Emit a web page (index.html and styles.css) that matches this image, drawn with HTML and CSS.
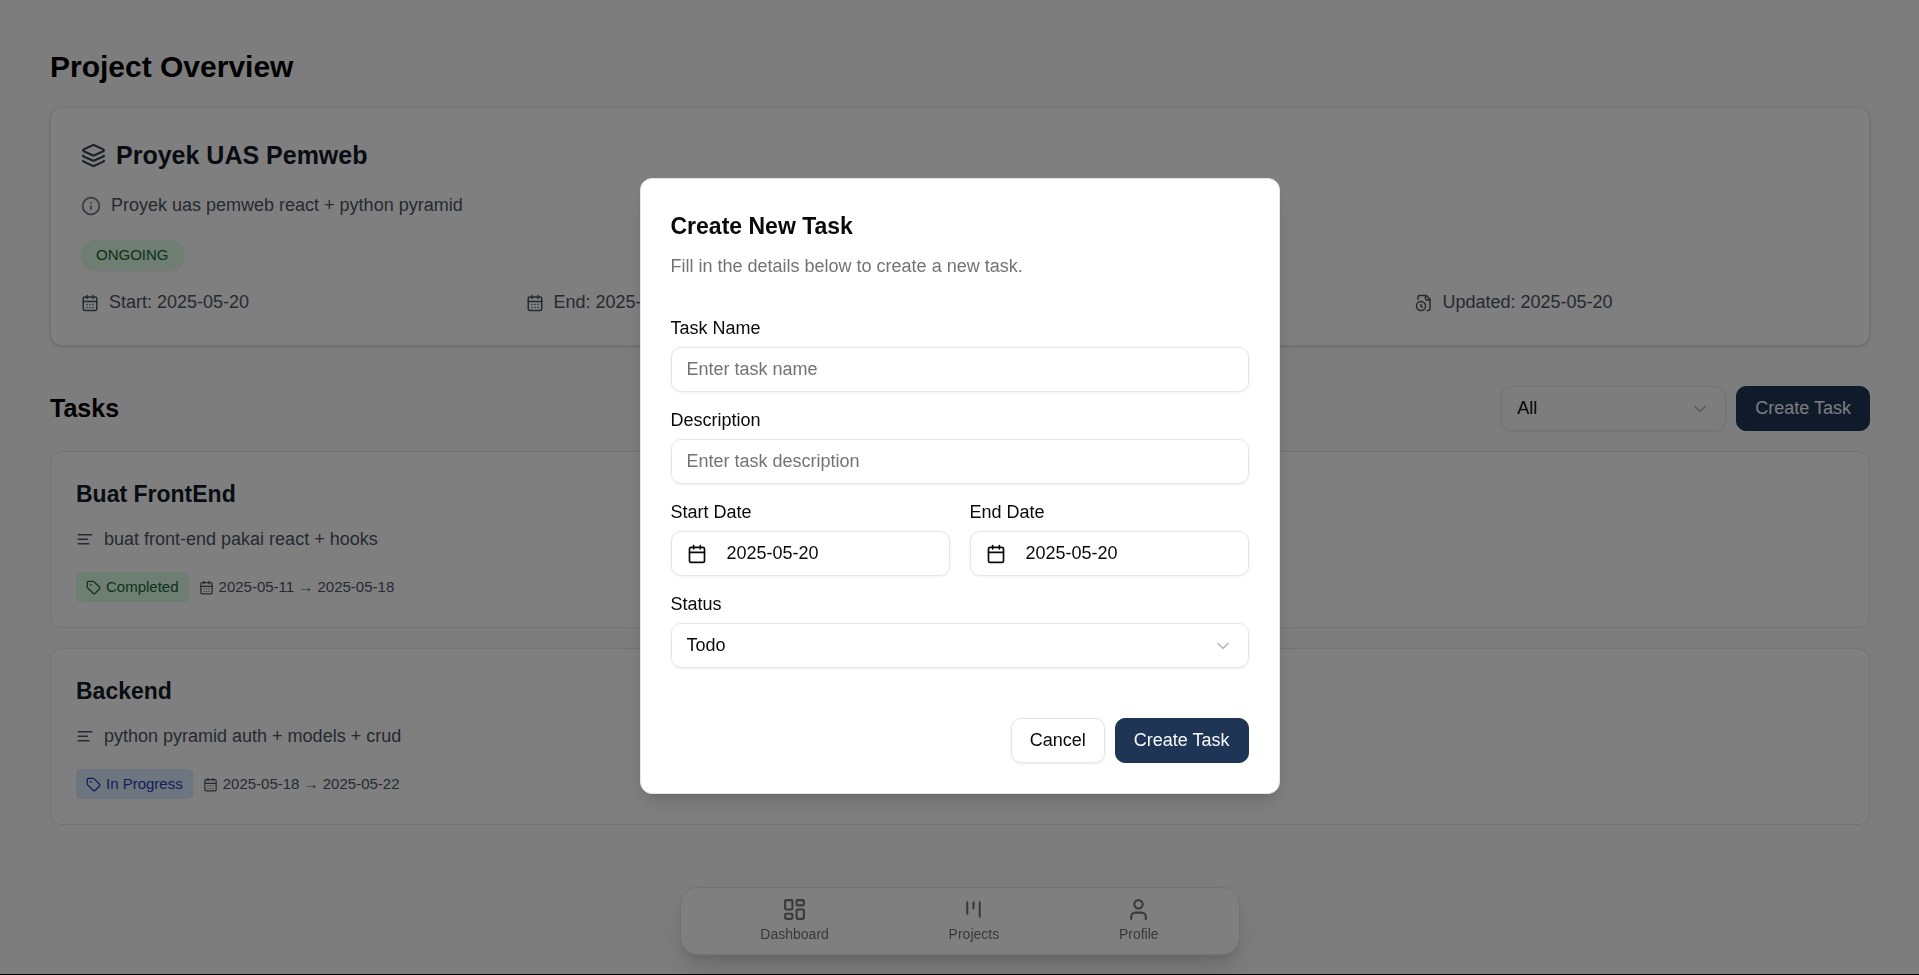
FILE: index.html
```html
<!DOCTYPE html>
<html lang="en">
<head>
<meta charset="utf-8">
<meta name="viewport" content="width=device-width, initial-scale=1">
<title>Project Overview</title>
<link rel="stylesheet" href="styles.css">
</head>
<body>
<svg class="sprite" aria-hidden="true">
  <symbol id="i-layers" viewBox="0 0 24 24"><path d="M12.83 2.18a2 2 0 0 0-1.66 0L2.6 6.08a1 1 0 0 0 0 1.83l8.58 3.91a2 2 0 0 0 1.66 0l8.58-3.9a1 1 0 0 0 0-1.83z"/><path d="M2 12a1 1 0 0 0 .58.91l8.6 3.91a2 2 0 0 0 1.65 0l8.58-3.9A1 1 0 0 0 22 12"/><path d="M2 17a1 1 0 0 0 .58.91l8.6 3.91a2 2 0 0 0 1.65 0l8.58-3.9A1 1 0 0 0 22 17"/></symbol>
  <symbol id="i-info" viewBox="0 0 24 24"><circle cx="12" cy="12" r="10"/><path d="M12 16v-4M12 8h.01"/></symbol>
  <symbol id="i-calendar" viewBox="0 0 24 24"><path d="M8 2v4M16 2v4"/><rect width="18" height="18" x="3" y="4" rx="2"/><path d="M3 10h18"/></symbol>
  <symbol id="i-calendar-days" viewBox="0 0 24 24"><path d="M8 2v4M16 2v4"/><rect width="18" height="18" x="3" y="4" rx="2"/><path d="M3 10h18M8 14h.01M12 14h.01M16 14h.01M8 18h.01M12 18h.01M16 18h.01"/></symbol>
  <symbol id="i-file-clock" viewBox="0 0 24 24"><path d="M16 22h2a2 2 0 0 0 2-2V7l-5-5H6a2 2 0 0 0-2 2v3"/><path d="M14 2v4a2 2 0 0 0 2 2h4"/><circle cx="8" cy="16" r="6"/><path d="M9.5 17.5 8 16.25V14"/></symbol>
  <symbol id="i-text" viewBox="0 0 24 24"><path d="M21 5H3M15 11H3M17 17H3"/></symbol>
  <symbol id="i-tag" viewBox="0 0 24 24"><path d="M12.586 2.586A2 2 0 0 0 11.172 2H4a2 2 0 0 0-2 2v7.172a2 2 0 0 0 .586 1.414l8.704 8.704a2.426 2.426 0 0 0 3.42 0l6.58-6.58a2.426 2.426 0 0 0 0-3.42z"/><circle cx="7.5" cy="7.5" r=".5" fill="currentColor"/></symbol>
  <symbol id="i-chevron" viewBox="0 0 24 24"><path d="m6 9 6 6 6-6"/></symbol>
  <symbol id="i-dashboard" viewBox="0 0 24 24"><rect width="7" height="9" x="3" y="3" rx="1"/><rect width="7" height="5" x="14" y="3" rx="1"/><rect width="7" height="9" x="14" y="12" rx="1"/><rect width="7" height="5" x="3" y="16" rx="1"/></symbol>
  <symbol id="i-kanban" viewBox="0 0 24 24"><path d="M6 5v11M12 5v6M18 5v14"/></symbol>
  <symbol id="i-user" viewBox="0 0 24 24"><path d="M19 21v-2a4 4 0 0 0-4-4H9a4 4 0 0 0-4 4v2"/><circle cx="12" cy="7" r="4"/></symbol>
</svg>

<main class="page">
  <h1 class="page-title">Project Overview</h1>

  <section class="project">
    <h2 class="project-name"><svg class="icon icon-lg"><use href="#i-layers"/></svg>Proyek UAS Pemweb</h2>
    <p class="project-text"><svg class="icon icon-md muted"><use href="#i-info"/></svg>Proyek uas pemweb react + python pyramid</p>
    <span class="pill">ONGOING</span>
    <div class="dates">
      <div class="line"><svg class="icon"><use href="#i-calendar-days"/></svg>Start: 2025-05-20</div>
      <div class="line"><svg class="icon"><use href="#i-calendar-days"/></svg>End: 2025-05-31</div>
      <div class="line"><svg class="icon"><use href="#i-file-clock"/></svg>Created: 2025-05-20</div>
      <div class="line"><svg class="icon"><use href="#i-file-clock"/></svg>Updated: 2025-05-20</div>
    </div>
  </section>

  <div class="toolbar">
    <h2 class="section-title">Tasks</h2>
    <div class="toolbar-actions">
      <div class="select filter">
        <select class="control" aria-label="Filter tasks by status"><option>All</option></select>
        <svg class="icon icon-md chevron"><use href="#i-chevron"/></svg>
      </div>
      <button class="button primary" type="button">Create Task</button>
    </div>
  </div>

  <div class="tasks">
    <article class="task">
      <h3 class="task-name">Buat FrontEnd</h3>
      <p class="line task-text"><svg class="icon"><use href="#i-text"/></svg>buat front-end pakai react + hooks</p>
      <div class="meta">
        <span class="badge done"><svg class="icon icon-sm"><use href="#i-tag"/></svg>Completed</span>
        <span class="range"><svg class="icon icon-sm"><use href="#i-calendar-days"/></svg>2025-05-11 → 2025-05-18</span>
      </div>
    </article>
    <article class="task">
      <h3 class="task-name">Backend</h3>
      <p class="line task-text"><svg class="icon"><use href="#i-text"/></svg>python pyramid auth + models + crud</p>
      <div class="meta">
        <span class="badge progress"><svg class="icon icon-sm"><use href="#i-tag"/></svg>In Progress</span>
        <span class="range"><svg class="icon icon-sm"><use href="#i-calendar-days"/></svg>2025-05-18 → 2025-05-22</span>
      </div>
    </article>
  </div>
</main>

<nav class="dock" aria-label="Main">
  <a class="dock-item" href="#dashboard"><svg class="icon icon-lg"><use href="#i-dashboard"/></svg>Dashboard</a>
  <a class="dock-item" href="#projects"><svg class="icon icon-lg"><use href="#i-kanban"/></svg>Projects</a>
  <a class="dock-item" href="#profile"><svg class="icon icon-lg"><use href="#i-user"/></svg>Profile</a>
</nav>

<div class="overlay">
  <form class="modal" role="dialog" aria-modal="true" aria-labelledby="modal-title">
    <header class="modal-head">
      <h2 class="modal-title" id="modal-title">Create New Task</h2>
      <p class="modal-text">Fill in the details below to create a new task.</p>
    </header>
    <div class="fields">
      <div class="field">
        <label for="name">Task Name</label>
        <input class="control" id="name" type="text" placeholder="Enter task name">
      </div>
      <div class="field">
        <label for="description">Description</label>
        <input class="control" id="description" type="text" placeholder="Enter task description">
      </div>
      <div class="field-row">
        <div class="field">
          <label for="start">Start Date</label>
          <button class="control date" id="start" type="button"><svg class="icon icon-md"><use href="#i-calendar"/></svg>2025-05-20</button>
        </div>
        <div class="field">
          <label for="end">End Date</label>
          <button class="control date" id="end" type="button"><svg class="icon icon-md"><use href="#i-calendar"/></svg>2025-05-20</button>
        </div>
      </div>
      <div class="field">
        <label for="status">Status</label>
        <div class="select">
          <select class="control" id="status"><option>Todo</option></select>
          <svg class="icon icon-md chevron"><use href="#i-chevron"/></svg>
        </div>
      </div>
    </div>
    <footer class="modal-foot">
      <button class="button outline" type="button">Cancel</button>
      <button class="button primary" type="submit">Create Task</button>
    </footer>
  </form>
</div>
</body>
</html>
```
FILE: styles.css
```css
* {
  box-sizing: border-box;
  margin: 0;
}

body {
  min-height: 100vh;
  border-bottom: 1px solid #000;
  background: #fafafa;
  color: #0a0a0a;
  font: 18px/25px "Liberation Sans", Arial, sans-serif;
}

button,
input,
select {
  color: inherit;
  font: inherit;
}

.sprite {
  display: none;
}

.icon {
  width: 18px;
  height: 18px;
  flex: none;
  fill: none;
  stroke: currentColor;
  stroke-width: 2;
  stroke-linecap: round;
  stroke-linejoin: round;
}

.icon-sm {
  width: 15px;
  height: 15px;
}

.icon-md {
  width: 20px;
  height: 20px;
}

.icon-lg {
  width: 25px;
  height: 25px;
}

.muted {
  color: #6b7280;
}

.page {
  padding: 47px 49px 0 50px;
}

.page-title {
  margin-bottom: 20px;
  color: #000;
  font-size: 30px;
  line-height: 40px;
}

.project {
  display: flex;
  flex-direction: column;
  align-items: flex-start;
  padding: 30px;
  border: 1px solid #e5e7eb;
  border-radius: 12px;
  background: #fff;
  box-shadow: 0 1px 4px rgba(0, 0, 0, 0.1), 0 1px 2px rgba(0, 0, 0, 0.06);
  color: #4b5563;
}

.project-name {
  display: flex;
  align-items: center;
  gap: 10px;
  color: #111827;
  font-size: 25px;
  line-height: 35px;
}

.project-name .icon {
  color: #374151;
}

.project-text {
  display: flex;
  align-items: center;
  gap: 10px;
  margin: 20px 0 22px;
}

.pill {
  padding: 5px 15px;
  border-radius: 15px;
  background: #dcfce7;
  box-shadow: 0 1px 3px rgba(0, 0, 0, 0.1);
  color: #166534;
  font-size: 15px;
  line-height: 20px;
}

.dates {
  display: grid;
  grid-template-columns: repeat(4, 1fr);
  gap: 20px;
  width: 100%;
  margin-top: 20px;
}

.line {
  display: flex;
  align-items: center;
  gap: 10px;
}

.toolbar {
  display: flex;
  align-items: center;
  justify-content: space-between;
  margin: 40px 0 20px;
}

.section-title {
  color: #000;
  font-size: 25px;
  line-height: 35px;
}

.toolbar-actions {
  display: flex;
  gap: 10px;
}

.select {
  position: relative;
}

.filter {
  width: 225px;
}

.control {
  display: block;
  width: 100%;
  height: 45px;
  padding: 0 15px;
  border: 1px solid #e5e5e5;
  border-radius: 10px;
  background: transparent;
  box-shadow: 0 1px 3px rgba(0, 0, 0, 0.06);
  appearance: none;
}

.control::placeholder {
  color: #737373;
  opacity: 1;
}

.chevron {
  position: absolute;
  top: 13px;
  right: 16px;
  color: #737373;
  opacity: 0.5;
  pointer-events: none;
}

.button {
  height: 45px;
  padding: 0 18px;
  border: 1px solid transparent;
  border-radius: 10px;
}

.primary {
  border-color: #1e3556;
  background: #1e3556;
  color: #f8fafc;
}

.outline {
  border-color: #e5e5e5;
  background: #fff;
  box-shadow: 0 1px 3px rgba(0, 0, 0, 0.08);
}

.tasks {
  display: grid;
  gap: 20px;
}

.task {
  padding: 25px;
  border: 1px solid #e5e7eb;
  border-radius: 12px;
  background: #fff;
}

.task-name {
  color: #111827;
  font-size: 23px;
  line-height: 35px;
}

.task-text {
  margin: 15px 0 20px;
  color: #4b5563;
}

.meta {
  display: flex;
  align-items: center;
  gap: 10px;
  color: #4b5563;
  font-size: 15px;
  line-height: 20px;
}

.badge,
.range {
  display: flex;
  align-items: center;
  gap: 5px;
}

.badge {
  padding: 5px 10px;
  border-radius: 5px;
}

.done {
  background: #dcfce7;
  color: #166534;
}

.progress {
  background: #dbeafe;
  color: #1e40af;
}

.dock {
  position: fixed;
  bottom: 20px;
  left: 50%;
  display: flex;
  justify-content: space-around;
  width: 560px;
  max-width: 100%;
  padding: 9px 20px 10px;
  border: 1px solid #e5e5e5;
  border-radius: 18px;
  background: #fff;
  box-shadow: 0 16px 26px -4px rgba(0, 0, 0, 0.14), 0 6px 12px -4px rgba(0, 0, 0, 0.1);
  transform: translateX(-50%);
}

.dock-item {
  display: flex;
  flex-direction: column;
  align-items: center;
  gap: 2px;
  color: #737373;
  font-size: 14px;
  line-height: 20px;
  text-decoration: none;
}

.overlay {
  position: fixed;
  inset: 0 0 1px;
  display: flex;
  align-items: center;
  justify-content: center;
  padding: 16px 16px 18px;
  background: rgba(0, 0, 0, 0.5);
}

.modal {
  width: 100%;
  max-width: 640px;
  padding: 30px;
  border: 1px solid #e5e5e5;
  border-radius: 12px;
  background: #fff;
  box-shadow: 0 12px 20px -4px rgba(0, 0, 0, 0.14), 0 4px 10px -4px rgba(0, 0, 0, 0.1);
}

.modal-title {
  margin-bottom: 10px;
  font-size: 23px;
  line-height: 35px;
}

.modal-text {
  color: #737373;
}

.fields {
  display: grid;
  gap: 20px;
  margin: 41px 0 50px;
}

.field {
  display: grid;
  gap: 10px;
}

.field label {
  line-height: 17px;
}

.field-row {
  display: grid;
  grid-template-columns: 1fr 1fr;
  gap: 20px;
}

.date {
  display: flex;
  align-items: center;
  gap: 20px;
}

.modal-foot {
  display: flex;
  justify-content: flex-end;
  gap: 10px;
}
```
